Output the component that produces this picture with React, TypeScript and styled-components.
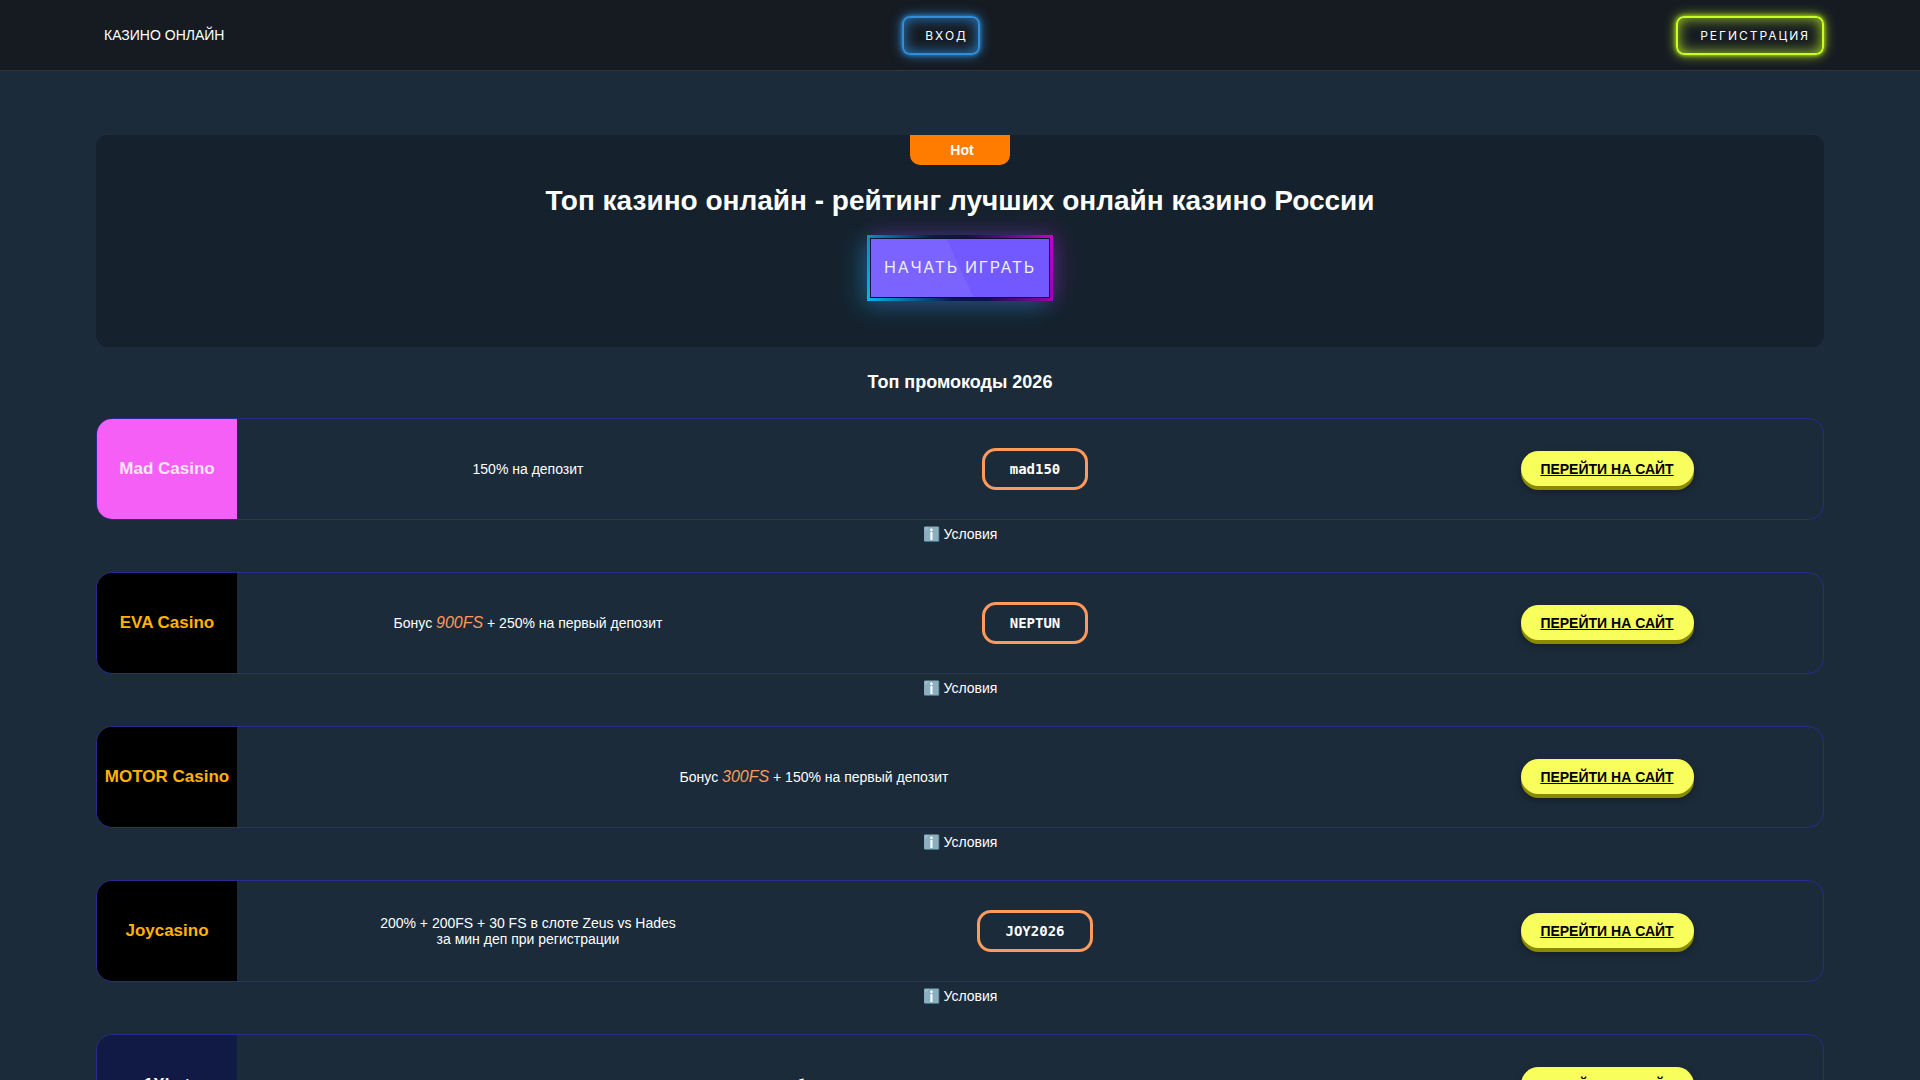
import styled, { createGlobalStyle } from 'styled-components';

const GlobalStyle = createGlobalStyle`
  * {
    box-sizing: border-box;
  }
  body {
    margin: 0;
    background: #1c2b3a;
    color: #fff;
    font-family: "Liberation Sans", Arial, sans-serif;
    font-size: 14px;
  }
`;

const Header = styled.header`
  height: 71px;
  background: #161b22;
  border-bottom: 1px solid #30363d;
  padding: 0 96px;
  display: flex;
  align-items: center;
  justify-content: space-between;
`;

const Brand = styled.a`
  width: 110px;
  padding-left: 8px;
  font-size: 14px;
  white-space: nowrap;
  color: #fff;
`;

const NeonButton = styled.a<{ $color: string; $glow: string; $pad: string }>`
  display: block;
  height: 39px;
  padding: ${(p) => p.$pad};
  line-height: 35px;
  border: 2px solid ${(p) => p.$color};
  border-radius: 8px;
  font-family: Inter, sans-serif;
  font-size: 12px;
  letter-spacing: 2px;
  color: #fff;
  box-shadow: 0 0 4px ${(p) => p.$glow}, 0 0 12px ${(p) => p.$glow}, inset 0 0 14px ${(p) => p.$glow};
`;

const Main = styled.main`
  padding: 64px 96px 0;
`;

const Hero = styled.section`
  position: relative;
  height: 212px;
  background: #15222d;
  border-radius: 12px;
  padding-top: 50px;
  display: flex;
  flex-direction: column;
  align-items: center;
`;

const HotTab = styled.div`
  position: absolute;
  top: 0;
  left: 50%;
  transform: translateX(-50%);
  width: 100px;
  height: 30px;
  padding-left: 4px;
  background: #ff7c00;
  border-radius: 0 0 10px 10px;
  font-size: 14px;
  font-weight: 700;
  line-height: 30px;
  text-align: center;
`;

const Title = styled.h1`
  margin: 0;
  font-size: 28px;
  line-height: 32px;
  font-weight: 700;
`;

const PlayFrame = styled.a`
  margin-top: 18px;
  width: 186px;
  height: 66px;
  padding: 3px;
  background: linear-gradient(72deg, #00b8f0 0%, #0b1a4a 42%, #14104a 58%, #c800c8 100%);
  box-shadow: -6px 6px 22px rgba(0, 195, 255, 0.3), 6px -2px 22px rgba(212, 0, 212, 0.28);
`;

const PlayInner = styled.div`
  height: 100%;
  border: 1px solid #0d1030;
  background: linear-gradient(65deg, #7a63ff 0 50%, #7158ff 50% 100%);
  font-family: Inter, sans-serif;
  font-size: 16px;
  letter-spacing: 1.7px;
  line-height: 56px;
  text-align: center;
  color: #f0edff;
`;

const SectionTitle = styled.h2`
  margin: 24px 0 25px;
  font-size: 18px;
  line-height: 22px;
  font-weight: 700;
  text-align: center;
`;

const Offer = styled.article`
  margin-bottom: 29px;
`;

const Card = styled.div`
  display: flex;
  align-items: stretch;
  height: 102px;
  border: 1px solid #2a2a8f;
  border-radius: 16px;
  overflow: hidden;
`;

const Logo = styled.div<{ $bg: string; $color: string }>`
  flex: 0 0 140px;
  display: flex;
  align-items: center;
  justify-content: center;
  background: ${(p) => p.$bg};
  color: ${(p) => p.$color};
  font-size: 17px;
  font-weight: 700;
  white-space: nowrap;
`;

const Bonus = styled.div`
  flex: 1;
  display: flex;
  align-items: center;
  justify-content: center;
  text-align: center;
  line-height: 16px;

  em {
    color: #ff9a5c;
    font-size: 16px;
  }
`;

const Slot = styled.div`
  flex: 0 0 432px;
  display: flex;
  align-items: center;
  justify-content: center;
`;

const PromoSlot = styled(Slot)`
  margin-right: 140px;
`;

const Promo = styled.div`
  height: 42px;
  padding: 0 25px;
  border: 3px solid #ff9a5c;
  border-radius: 14px;
  font-family: "DejaVu Sans Mono", monospace;
  font-size: 14px;
  font-weight: 700;
  line-height: 36px;
`;

const GoButton = styled.a`
  width: 173px;
  height: 35px;
  margin-bottom: 1px;
  background: #f8ff5c;
  border-radius: 20px;
  color: #000;
  font-size: 14px;
  font-weight: 700;
  line-height: 36px;
  text-align: center;
  text-decoration: underline;
  box-shadow: 0 4px 0 #8a8a00, 0 5px 8px rgba(0, 0, 0, 0.4);
`;

const Terms = styled.div`
  margin-top: 5px;
  height: 18px;
  font-size: 14px;
  line-height: 18px;
  text-align: center;
`;

type OfferData = {
  name: string;
  bg: string;
  color: string;
  bonus: React.ReactNode;
  code?: string;
};

const offers: OfferData[] = [
  { name: 'Mad Casino', bg: '#f55ff5', color: '#fbe6fb', bonus: '150% на депозит', code: 'mad150' },
  {
    name: 'EVA Casino',
    bg: '#000',
    color: '#ffb300',
    bonus: (
      <span>
        Бонус <em>900FS</em> + 250% на первый депозит
      </span>
    ),
    code: 'NEPTUN',
  },
  {
    name: 'MOTOR Casino',
    bg: '#000',
    color: '#ffb300',
    bonus: (
      <span>
        Бонус <em>300FS</em> + 150% на первый депозит
      </span>
    ),
  },
  {
    name: 'Joycasino',
    bg: '#000',
    color: '#ffb300',
    bonus: (
      <span>
        200% + 200FS + 30 FS в слоте Zeus vs Hades
        <br />
        за мин деп при регистрации
      </span>
    ),
    code: 'JOY2026',
  },
  { name: '1Xbet', bg: '#111a45', color: '#fff', bonus: '50 FS + 5% бонус на депозит' },
];

export default function App() {
  return (
    <>
      <GlobalStyle />
      <Header>
        <Brand>КАЗИНО ОНЛАЙН</Brand>
        <NeonButton $color="#2f8fdc" $glow="rgba(47, 143, 220, 0.85)" $pad="0 10px 0 21px">ВХОД</NeonButton>
        <NeonButton $color="#c8ff1e" $glow="rgba(200, 255, 30, 0.8)" $pad="0 12px 0 22px">РЕГИСТРАЦИЯ</NeonButton>
      </Header>
      <Main>
        <Hero>
          <HotTab>Hot</HotTab>
          <Title>Топ казино онлайн - рейтинг лучших онлайн казино России</Title>
          <PlayFrame>
            <PlayInner>НАЧАТЬ ИГРАТЬ</PlayInner>
          </PlayFrame>
        </Hero>
        <SectionTitle>Топ промокоды 2026</SectionTitle>
        {offers.map((offer) => (
          <Offer key={offer.name}>
            <Card>
              <Logo $bg={offer.bg} $color={offer.color}>{offer.name}</Logo>
              <Bonus>{offer.bonus}</Bonus>
              {offer.code && (
                <PromoSlot>
                  <Promo>{offer.code}</Promo>
                </PromoSlot>
              )}
              <Slot>
                <GoButton>ПЕРЕЙТИ НА САЙТ</GoButton>
              </Slot>
            </Card>
            <Terms>ℹ️ Условия</Terms>
          </Offer>
        ))}
      </Main>
    </>
  );
}
